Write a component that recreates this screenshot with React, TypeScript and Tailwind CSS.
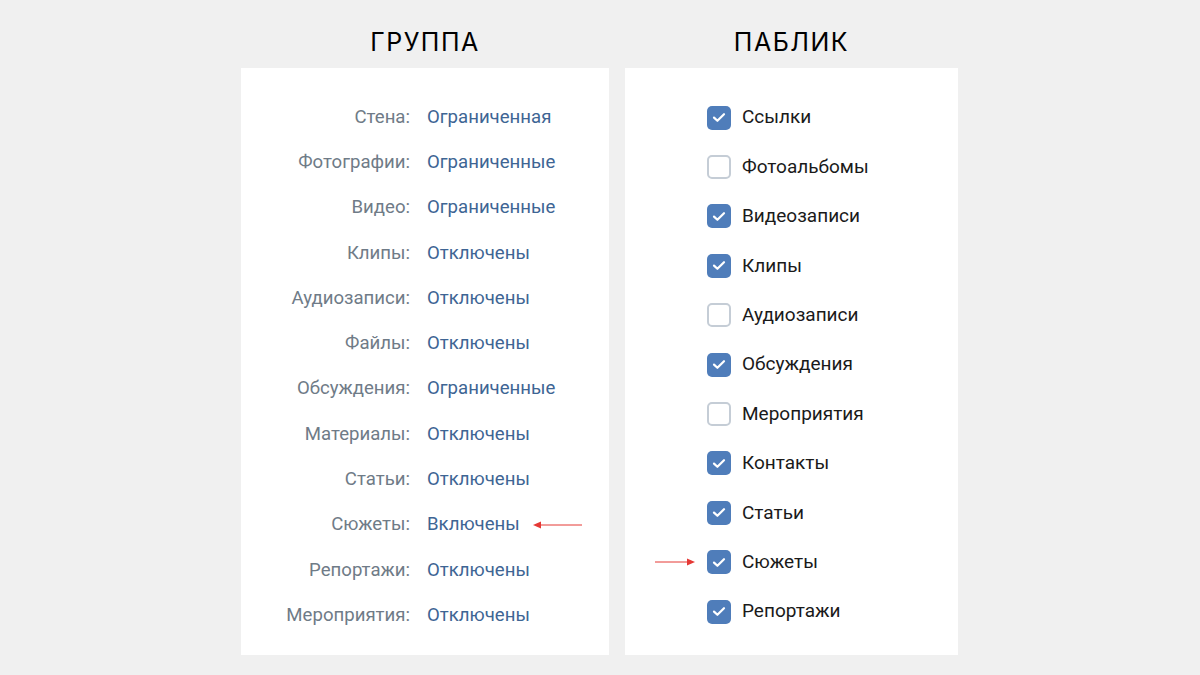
const groupRows: [string, string][] = [
  ['Стена:', 'Ограниченная'],
  ['Фотографии:', 'Ограниченные'],
  ['Видео:', 'Ограниченные'],
  ['Клипы:', 'Отключены'],
  ['Аудиозаписи:', 'Отключены'],
  ['Файлы:', 'Отключены'],
  ['Обсуждения:', 'Ограниченные'],
  ['Материалы:', 'Отключены'],
  ['Статьи:', 'Отключены'],
  ['Сюжеты:', 'Включены'],
  ['Репортажи:', 'Отключены'],
  ['Мероприятия:', 'Отключены'],
];

const publicRows: [string, boolean][] = [
  ['Ссылки', true],
  ['Фотоальбомы', false],
  ['Видеозаписи', true],
  ['Клипы', true],
  ['Аудиозаписи', false],
  ['Обсуждения', true],
  ['Мероприятия', false],
  ['Контакты', true],
  ['Статьи', true],
  ['Сюжеты', true],
  ['Репортажи', true],
];

function ArrowLeft() {
  return (
    <svg width="50" height="8" viewBox="0 0 50 8" className="ml-[13px]">
      <line x1="6" y1="4" x2="49" y2="4" stroke="#e53935" strokeWidth="1" />
      <polygon points="0,4 8,0.5 8,7.5" fill="#e53935" />
    </svg>
  );
}

function ArrowRight() {
  return (
    <svg width="40" height="8" viewBox="0 0 40 8" className="absolute right-full mr-[12px] top-1/2 -translate-y-1/2">
      <line x1="0" y1="4" x2="34" y2="4" stroke="#e53935" strokeWidth="1" />
      <polygon points="40,4 32,0.5 32,7.5" fill="#e53935" />
    </svg>
  );
}

function Checkbox({ checked }: { checked: boolean }) {
  if (!checked) {
    return <div className="w-[24px] h-[24px] rounded-[5px] border-2 border-[#c5cdd6] bg-white" />;
  }
  return (
    <div className="w-[24px] h-[24px] rounded-[5px] bg-[#4f7dba] flex items-center justify-center">
      <svg width="14" height="11" viewBox="0 0 14 11">
        <path d="M2 5.6 L5.4 8.8 L12 2.2" fill="none" stroke="white" strokeWidth="2.2" strokeLinecap="round" strokeLinejoin="round" />
      </svg>
    </div>
  );
}

export default function App() {
  return (
    <div className="w-[1200px] h-[675px] bg-[#f0f0f0] flex gap-4 pt-[26px] pl-[241px]">
      <div className="flex flex-col items-center">
        <h2 className="text-[25px] leading-[32px] tracking-[0.06em] text-black mb-[10px] font-['Inter',sans-serif]">ГРУППА</h2>
        <div className="w-[368px] h-[587px] bg-white pt-[27px] font-['Roboto',sans-serif] text-[18.6px]">
          {groupRows.map(([label, value]) => (
            <div key={label} className="h-[45.3px] flex items-center">
              <span className="w-[169px] text-right text-[#6f7b87]">{label}</span>
              <span className="ml-[17px] text-[#3e6594]">{value}</span>
              {label === 'Сюжеты:' && <ArrowLeft />}
            </div>
          ))}
        </div>
      </div>
      <div className="flex flex-col items-center">
        <h2 className="text-[25px] leading-[32px] tracking-[0.06em] text-black mb-[10px] font-['Inter',sans-serif]">ПАБЛИК</h2>
        <div className="w-[333px] h-[587px] bg-white pt-[25px] pl-[82px] font-['Roboto',sans-serif] text-[19px]">
          {publicRows.map(([label, checked]) => (
            <div key={label} className="relative h-[49.4px] flex items-center">
              {label === 'Сюжеты' && <ArrowRight />}
              <Checkbox checked={checked} />
              <span className="ml-[11px] text-[#1a1a1a]">{label}</span>
            </div>
          ))}
        </div>
      </div>
    </div>
  );
}
